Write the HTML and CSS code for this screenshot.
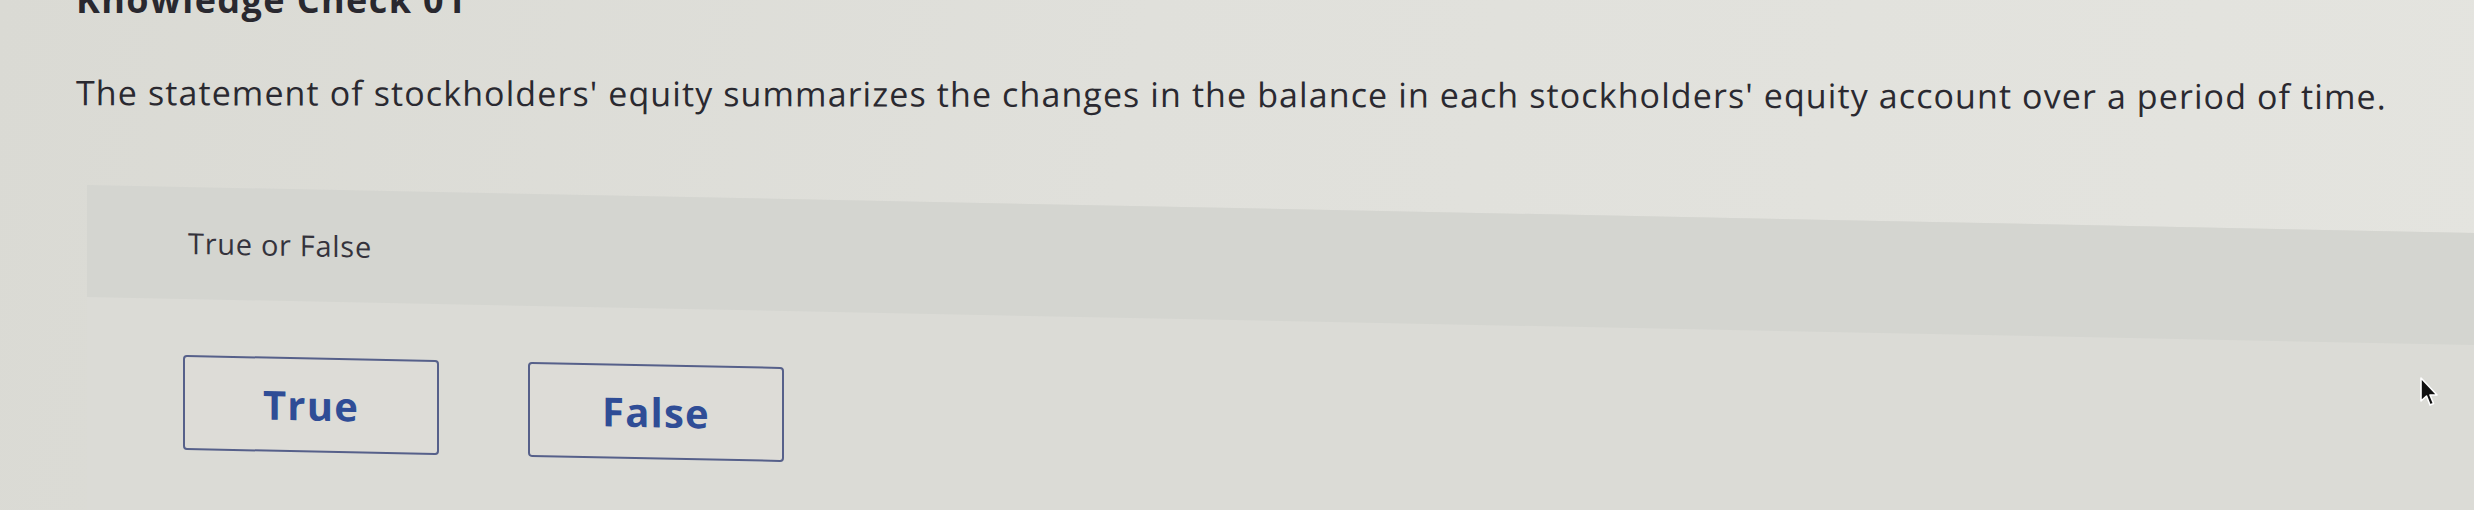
FILE: index.html
```html
<!DOCTYPE html>
<html lang="en">
<head>
  <meta charset="UTF-8" />
  <meta name="viewport" content="width=device-width, initial-scale=1.0" />
  <title>Knowledge Check 01</title>
  <link rel="stylesheet" href="styles.css">
</head>
<body>
  <div class="screen">
    <h2 class="title">Knowledge Check 01</h2>
    <p class="prompt">The statement of stockholders' equity summarizes the changes in the balance in each stockholders' equity account over a period of time.</p>

    <section class="question">
      <div class="question-head">True or False</div>
      <div class="choices">
        <button class="choice">True</button>
        <button class="choice">False</button>
      </div>
    </section>

    <!-- mouse pointer -->
    <svg class="pointer" width="20" height="32" viewBox="0 0 20 32">
      <path d="M2 1 L2 24 L7.5 19 L11 28 L14.5 26.5 L11 18 L18 18 Z" fill="#111" stroke="#fff" stroke-width="1.6" stroke-linejoin="round"/>
    </svg>
  </div>
</body>
</html>
```

FILE: styles.css
```css
html, body {
  margin: 0;
  overflow: hidden;
}
body {
  font-family: 'Open Sans', Lato, sans-serif;
  color: #2a2930;
  background: #dcdcd7;
}
.screen {
  position: relative;
  height: 510px;
  overflow: hidden;
  background: linear-gradient(100deg, #dadad4 0%, #e0e0db 45%, #e4e4df 100%);
}
.title {
  margin: -18px 0 0;
  padding-left: 76px;
  font-size: 36px;
  line-height: 36px;
  font-weight: 700;
  letter-spacing: 1.4px;
  color: #29282f;
}
.prompt {
  margin: 54px 0 0;
  padding-left: 76px;
  font-size: 34px;
  line-height: 40px;
  letter-spacing: 1.1px;
  white-space: nowrap;
  transform: skewY(0.1deg);
  transform-origin: 0 0;
}
/* panel leans a little, screen was photographed at an angle */
.question {
  margin: 73px 0 0 87px;
  height: 330px;
  background: #dbdbd6;
  transform: skewY(1.15deg);
  transform-origin: 0 0;
}
.question-head {
  height: 112px;
  box-sizing: border-box;
  padding: 41px 0 0 101px;
  background: #d4d5d0;
  font-size: 29px;
  line-height: 29px;
  letter-spacing: 0.7px;
  color: #34333c;
}
.choices {
  display: flex;
  gap: 89px;
  padding: 56px 0 0 96px;
}
.choice {
  width: 256px;
  height: 95px;
  border: 2px solid #56608a;
  border-radius: 4px;
  background: #dddcd7;
  font-family: 'Open Sans', Lato, sans-serif;
  font-size: 40px;
  font-weight: 700;
  letter-spacing: 1.2px;
  color: #2f4d96;
  padding: 0;
}
.pointer {
  position: absolute;
  left: 2419px;
  top: 377px;
}
```
